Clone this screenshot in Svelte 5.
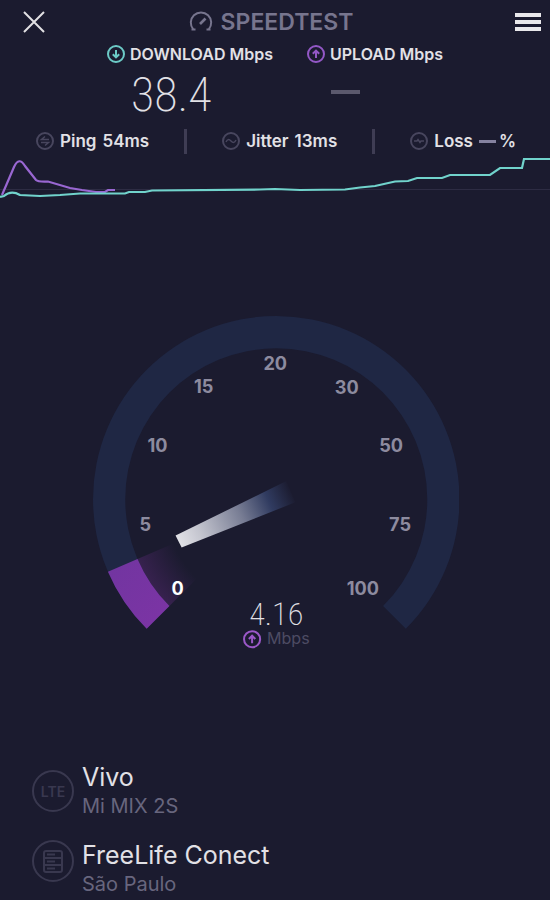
<script>
  const ticks = [
    { v: '0', x: 178, y: 587, active: true },
    { v: '5', x: 146, y: 524 },
    { v: '10', x: 158, y: 445 },
    { v: '15', x: 204, y: 386 },
    { v: '20', x: 275, y: 364 },
    { v: '30', x: 346, y: 387 },
    { v: '50', x: 390, y: 445 },
    { v: '75', x: 399, y: 524 },
    { v: '100', x: 362, y: 587 }
  ];
</script>

{#snippet arrow(up)}
  <svg class="arrow" class:up viewBox="0 0 18 18" aria-hidden="true">
    <circle cx="9" cy="9" r="8" />
    <path d={up ? 'M9 13V6M5.8 8.8 9 5.6l3.2 3.2' : 'M9 5v7M5.8 9.2 9 12.4l3.2-3.2'} />
  </svg>
{/snippet}

<main>
  <header>
    <button aria-label="Close">
      <svg width="22" height="22" viewBox="0 0 22 22"><path d="M1 1 21 21M21 1 1 21" stroke="#e2e1e4" stroke-width="2" /></svg>
    </button>
    <h1>
      <svg width="24" height="22" viewBox="0 0 24 22" fill="none" stroke="#77758e" stroke-width="2">
        <path d="M2.500 18.500H6.500M17.500 18.500H21.500M4.300 18.300A10.200 10.200 0 1 1 19.700 18.300" />
        <path d="m11 13 5.500-5.500" stroke-width="2.6" />
      </svg>
      SPEEDTEST
    </h1>
    <button aria-label="Menu">
      <svg width="26" height="20" viewBox="0 0 26 20"><path d="M0 3h26M0 10h26M0 17h26" stroke="#e9e8eb" stroke-width="4" /></svg>
    </button>
  </header>

  <section class="speeds">
    <div class="speed">
      <h2>{@render arrow(false)}DOWNLOAD Mbps</h2>
      <p class="result">38.4</p>
    </div>
    <div class="speed">
      <h2>{@render arrow(true)}UPLOAD Mbps</h2>
      <p class="result"><span class="dash"></span></p>
    </div>
  </section>

  <section class="stats">
    <div class="stat">
      <svg viewBox="0 0 18 18" aria-hidden="true"><circle cx="9" cy="9" r="8" /><path d="M13 7.500H5.500L9 4.500M5 10.500h7.500L9 13.500" /></svg>
      <span>Ping</span><span>54ms</span>
    </div>
    <i></i>
    <div class="stat">
      <svg viewBox="0 0 18 18" aria-hidden="true"><circle cx="9" cy="9" r="8" /><path d="M4 10c1.500-3 3-3 5-1s3.500 2 5-1" /></svg>
      <span>Jitter</span><span>13ms</span>
    </div>
    <i></i>
    <div class="stat">
      <svg viewBox="0 0 18 18" aria-hidden="true"><circle cx="9" cy="9" r="8" /><path d="M4 9h3l1-1.500 2 3 1-1.500h3" /></svg>
      <span>Loss</span><span class="pct"><b></b>%</span>
    </div>
  </section>

  <svg class="chart" viewBox="0 155 550 50" preserveAspectRatio="none" aria-label="Speed history">
    <path d="M0 188.500H550" stroke="#2d2c43" stroke-width="1" />
    <path d="M2 194 14 166Q19 155 25 165L36 179Q38 181 48 180.500L70 187 82 189 96 191 105 191 108 189H115" stroke="#9967d2" />
    <path d="M0 196 4 195Q11 189 20 194L40 195 60 194 80 192.500H125L129 191 145 191 152 189.500 260 188.500 275 188 300 189 345 188.500 360 186.500 375 185 395 180.500 408 180 417 177H442L450 174H490L500 167H522L524 158H550" stroke="#71d3cc" />
  </svg>

  <svg class="gauge" viewBox="92 315 366 335" aria-label="Current upload speed">
    <defs>
      <linearGradient id="needle" gradientUnits="userSpaceOnUse" x1="178" y1="541" x2="292" y2="491">
        <stop offset="0" stop-color="#e3e3e8" />
        <stop offset=".2" stop-color="#c3c4ce" />
        <stop offset=".55" stop-color="#787d94" />
        <stop offset=".8" stop-color="#303b60" />
        <stop offset="1" stop-color="#1b1b2f" />
      </linearGradient>
      <radialGradient id="glow" gradientUnits="userSpaceOnUse" cx="276" cy="498" r="150">
        <stop offset=".74" stop-color="#722f91" stop-opacity="0" />
        <stop offset="1" stop-color="#722f91" stop-opacity=".32" />
      </radialGradient>
      <linearGradient id="purple" x1="0" y1="0" x2="1" y2="1">
        <stop offset="0" stop-color="#7135a0" />
        <stop offset="1" stop-color="#7d34a5" />
      </linearGradient>
    </defs>
    <path d="M147.300 626.700A182 182 0 1 1 404.700 626.700L382.100 604.100A150 150 0 1 0 169.900 604.100Z" fill="#1f2744" />
    <path d="M276 498 138.200 557.300A150 150 0 0 0 169.900 604.100Z" fill="url(#glow)" />
    <path d="M108.800 570A182 182 0 0 0 147.300 626.700L169.900 604.100A150 150 0 0 1 138.200 557.300Z" fill="url(#purple)" />
    <path d="M176 534 286 480 295 501 182 546Z" fill="url(#needle)" />
    {#each ticks as t}
      <text class="tick" class:active={t.active} x={t.x} y={t.y + 6}>{t.v}</text>
    {/each}
    <text class="current" x="276" y="623">4.16</text>
    <g class="unit-icon">
      <circle cx="252" cy="637" r="8" />
      <path d="M252 641v-7M248.800 636.800 252 633.600l3.200 3.200" />
    </g>
    <text class="unit" x="288" y="642">Mbps</text>
  </svg>

  <footer>
    <div class="host">
      <svg viewBox="0 0 42 42" aria-hidden="true"><circle cx="21" cy="21" r="20" /><text x="21" y="27">LTE</text></svg>
      <div><h3>Vivo</h3><p>Mi MIX 2S</p></div>
    </div>
    <div class="host server">
      <svg viewBox="0 0 42 42" aria-hidden="true"><circle cx="21" cy="21" r="20" /><rect x="12" y="11" width="18" height="21" rx="2" /><path d="M12 18h18M12 25h18M15 14.500h8M15 21.500h8M15 28.500h8" /></svg>
      <div><h3>FreeLife Conect</h3><p>São Paulo</p></div>
    </div>
  </footer>
</main>

<style>
  :global(body) {
    margin: 0;
    background: #1b1b2f;
  }
  main {
    display: flex;
    flex-direction: column;
    min-height: 100vh;
    box-sizing: border-box;
    overflow: hidden;
    background: #1b1b2f;
    color: #e2e1e6;
    font-family: Inter, "Liberation Sans", sans-serif;
  }
  h1, h2, h3, p {
    margin: 0;
    font-weight: 400;
  }
  header {
    display: flex;
    align-items: center;
    justify-content: space-between;
    height: 44px;
    padding: 0 9px 0 23px;
  }
  button {
    display: flex;
    padding: 0;
    border: 0;
    background: none;
  }
  h1 {
    display: flex;
    align-items: center;
    gap: 8px;
    margin-right: 18px;
    color: #77758e;
    font-size: 23px;
    font-weight: 600;
  }
  .speeds {
    display: flex;
    justify-content: center;
    gap: 34px;
  }
  h2 {
    display: flex;
    align-items: center;
    gap: 5px;
    height: 20px;
    font-size: 16px;
    font-weight: 600;
  }
  .arrow {
    width: 18px;
    height: 18px;
    fill: none;
    stroke: #6ccac6;
    stroke-width: 2;
  }
  .arrow.up {
    stroke: #9358c6;
  }
  .result {
    display: flex;
    align-items: center;
    height: 60px;
    padding-left: 24px;
    font-family: "Roboto Condensed", Roboto, sans-serif;
    font-size: 48px;
    font-weight: 200;
  }
  .dash {
    width: 29px;
    height: 4px;
    margin-bottom: 4px;
    background: #5b596d;
  }
  .stats {
    display: flex;
    align-items: center;
    justify-content: space-between;
    height: 30px;
    padding: 2px 34px 0 36px;
    font-size: 17px;
    font-weight: 600;
  }
  .stats i {
    width: 3px;
    height: 25px;
    background: #3f3d54;
  }
  .stat {
    display: flex;
    align-items: center;
    gap: 6px;
  }
  .stat svg {
    width: 18px;
    height: 18px;
    fill: none;
    stroke: #48465e;
    stroke-width: 2;
  }
  .stat path {
    stroke-width: 1.500;
  }
  .pct {
    display: flex;
    align-items: center;
    gap: 3px;
  }
  .pct b {
    width: 17px;
    height: 3px;
    background: #8582a0;
  }
  .chart {
    width: 100%;
    height: 50px;
    fill: none;
    stroke-width: 2.200;
  }
  .gauge {
    width: 67%;
    min-width: 366px;
    max-width: 480px;
    margin: 109px auto 0;
  }
  .tick {
    fill: #8d8b9f;
    font-size: 18px;
    font-weight: 700;
    text-anchor: middle;
  }
  .tick.active {
    fill: #fff;
  }
  .current {
    fill: #e2e1e6;
    font-family: "Roboto Condensed", Roboto, sans-serif;
    font-size: 32px;
    font-weight: 200;
    text-anchor: middle;
  }
  .unit-icon {
    fill: none;
    stroke: #9b58c8;
    stroke-width: 2;
  }
  .unit {
    fill: #4d4b63;
    font-size: 16px;
    text-anchor: middle;
  }
  footer {
    display: flex;
    flex-direction: column;
    gap: 20px;
    margin-top: auto;
    padding: 0 32px 2px;
  }
  .host {
    display: flex;
    align-items: center;
    gap: 8px;
  }
  .host.server {
    align-items: flex-start;
  }
  .host svg {
    width: 42px;
    height: 42px;
    fill: none;
    stroke: #39384f;
    stroke-width: 2;
  }
  .host text {
    fill: #39384f;
    stroke: none;
    font-size: 14px;
    font-weight: 600;
    text-anchor: middle;
  }
  h3 {
    font-size: 25px;
    line-height: 30px;
  }
  .host p {
    color: #68667e;
    font-size: 20px;
    line-height: 28px;
  }
</style>
